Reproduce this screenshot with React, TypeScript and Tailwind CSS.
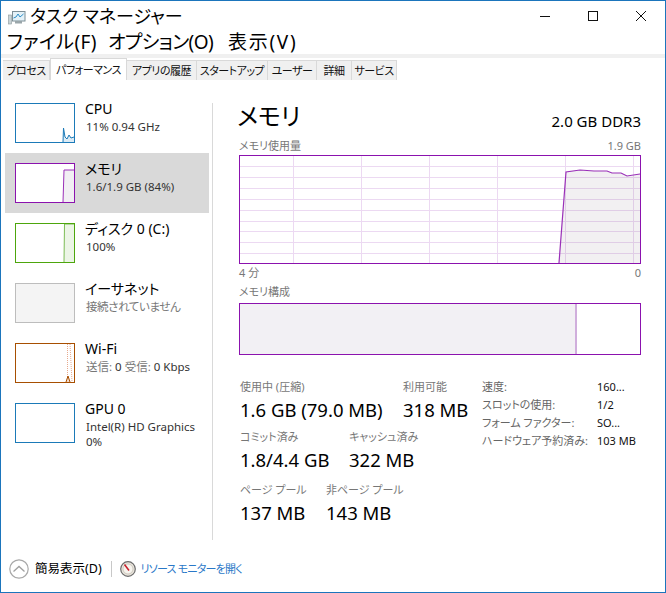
import React from "react";

const font = "font-['Noto_Sans','Noto_Sans_CJK_JP',sans-serif] [font-feature-settings:'palt']";

const tabs = [
  { label: "プロセス", w: "w-[47px]" },
  { label: "パフォーマンス", w: "w-[77px]", active: true },
  { label: "アプリの履歴", w: "w-[70px]" },
  { label: "スタートアップ", w: "w-[71px]" },
  { label: "ユーザー", w: "w-[49px]" },
  { label: "詳細", w: "w-[35px]" },
  { label: "サービス", w: "w-[45px]" },
];

function Thumb({ color, bg = "bg-white", children }: { color: string; bg?: string; children?: React.ReactNode }) {
  return <div className={`w-[60px] h-10 border ${color} ${bg} shrink-0 overflow-hidden`}>{children}</div>;
}

function Chart({ d, fill, stroke }: { d: string; fill: string; stroke: string }) {
  return (
    <svg width="58" height="38" viewBox="0 0 58 38" className="block">
      <path d={`${d} L58 38 Z`} fill={fill} stroke="none" />
      <path d={d} fill="none" stroke={stroke} strokeWidth="1" />
    </svg>
  );
}

function SideItem({ thumb, title, sub, selected }: { thumb: React.ReactNode; title: string; sub: React.ReactNode; selected?: boolean }) {
  return (
    <div className={`h-[60px] w-[204px] flex items-center pl-[10px] gap-[10px] ${selected ? "bg-[#d9d9d9]" : ""}`}>
      {thumb}
      <div className="flex flex-col self-start pt-[6px]">
        <div className="text-[14px] leading-[20px] text-black whitespace-nowrap">{title}</div>
        <div className="text-[11.5px] leading-[15px] text-[#333] whitespace-nowrap ml-[1px]">{sub}</div>
      </div>
    </div>
  );
}

function Stat({ label, value, w }: { label: string; value: string; w: string }) {
  return (
    <div className={`${w} shrink-0`}>
      <div className="text-[11px] leading-[15px] text-[#777] whitespace-nowrap">{label}</div>
      <div className="text-[18.5px] leading-[24px] mt-[4px] text-black whitespace-nowrap">{value}</div>
    </div>
  );
}

const hLines = [11, 22, 33, 44, 55, 66, 76, 87, 98];
const vLines = [54, 122, 190, 258, 326, 394];

function MemoryGraph() {
  const line = "M319 107 L326 16 L340 14 L354 15 L367 15 L372 17 L381 17 L387 20 L400 18";
  return (
    <div className="w-[402px] h-[109px] border border-[#8b12ae] bg-white">
      <svg width="400" height="107" viewBox="0 0 400 107" className="block">
        {hLines.map((y) => (
          <line key={y} x1="0" x2="400" y1={y - 0.5} y2={y - 0.5} stroke="#ecd9f2" />
        ))}
        {vLines.map((x) => (
          <line key={x} x1={x - 0.5} x2={x - 0.5} y1="0" y2="107" stroke="#ecd9f2" />
        ))}
        <path d={`${line} L400 107 Z`} fill="#6b5a70" fillOpacity="0.09" />
        <path d={line} fill="none" stroke="#9a30b8" strokeWidth="1.2" />
      </svg>
    </div>
  );
}

export default function App() {
  return (
    <div className={`w-[666px] h-[593px] bg-white border border-[#1b75bc] flex flex-col overflow-hidden ${font}`}>
      {/* title bar */}
      <div className="h-[29px] flex items-center shrink-0 relative">
        <svg width="18" height="18" viewBox="0 0 18 18" className="ml-[7px] mt-[2px]">
          <rect x="0.5" y="7" width="3" height="9" fill="#c9d3d6" stroke="#8b989c" strokeWidth="0.6" />
          <rect x="4.5" y="3.5" width="12.5" height="9.5" fill="#e4f1f8" stroke="#7d8e96" />
          <path d="M5.5 10 L8 9 L10 6 L12 9 L15.5 6" fill="none" stroke="#2f8fc7" strokeWidth="1" />
          <rect x="7" y="13" width="7" height="2.5" fill="#9aa6aa" />
        </svg>
        <span className="ml-[4px] text-[18px] leading-[24px] text-black whitespace-nowrap">タスク マネージャー</span>
        <div className="ml-auto flex items-center">
          <svg width="12" height="12" viewBox="0 0 12 12" className="mr-[36px]"><path d="M1 6.5H11" stroke="#111" strokeWidth="1" /></svg>
          <svg width="12" height="12" viewBox="0 0 12 12" className="mr-[36px]"><rect x="1.5" y="1.5" width="9" height="9" fill="none" stroke="#111" /></svg>
          <svg width="12" height="12" viewBox="0 0 12 12" className="mr-[18px]"><path d="M1 1L11 11M11 1L1 11" stroke="#111" strokeWidth="1" /></svg>
        </div>
      </div>
      {/* menu */}
      <div className="h-[24px] flex items-center pl-[6px] text-[19px] leading-[24px] text-black whitespace-nowrap shrink-0">
        <span className="w-[101px] tracking-[0.4px]">ファイル(F)</span>
        <span className="w-[120px] tracking-[-0.6px]">オプション(O)</span>
        <span className="tracking-[1.7px]">表示(V)</span>
      </div>
      <div className="h-[4px] bg-[#f0f0f0] shrink-0" />
      {/* tabs */}
      <div className="h-[22px] pl-[2px] flex items-end shrink-0">
        {tabs.map((t) =>
          <div
            key={t.label}
            className={`${t.w} flex items-center justify-center pt-[1px] text-[11px] tracking-[-0.5px] text-[#111] whitespace-nowrap border-t border-r border-[#d9d9d9] ${t.active ? "h-[22px] bg-white border-l relative z-10" : "h-[20px] bg-[#f0f0f0]"}`}
          >
            {t.label}
          </div>
        )}
      </div>
      {/* body */}
      <div className="flex flex-1 min-h-0 pl-[4px]">
        <div className="w-[204px] pt-[13px] shrink-0">
          <SideItem
            thumb={<Thumb color="border-[#1b7ab8]"><Chart fill="#dcebf5" stroke="#1b7ab8" d="M47 38 L47.5 24 L49 33 L51 35 L53 31 L55 34 L58 33" /></Thumb>}
            title="CPU"
            sub="11%  0.94 GHz"
          />
          <SideItem
            selected
            thumb={<Thumb color="border-[#8b12ae]"><Chart fill="#f1eff3" stroke="#9a30b8" d="M47 38 L48 6 L58 6" /></Thumb>}
            title="メモリ"
            sub="1.6/1.9 GB (84%)"
          />
          <SideItem
            thumb={<Thumb color="border-[#4da60c]"><Chart fill="#ecf5e6" stroke="#7cbc54" d="M48 38 L48.5 0 L58 0" /></Thumb>}
            title="ディスク 0 (C:)"
            sub="100%"
          />
          <SideItem
            thumb={<Thumb color="border-[#bdbdbd]" bg="bg-[#f4f4f4]" />}
            title="イーサネット"
            sub={<span className="text-[#777] tracking-[-0.4px]">接続されていません</span>}
          />
          <SideItem
            thumb={
              <Thumb color="border-[#a74f01]">
                <svg width="58" height="38" viewBox="0 0 58 38" className="block">
                  <line x1="51.5" y1="0" x2="51.5" y2="38" stroke="#e8a98c" strokeDasharray="1 1" />
                  <path d="M54 0 L56 38" stroke="#e8a98c" strokeDasharray="1 1" />
                  <path d="M50 38 L52 32 L54 38" fill="#f5dccb" stroke="#a74f01" />
                </svg>
              </Thumb>
            }
            title="Wi-Fi"
            sub={<span><span className="text-[#777]">送信:</span> 0 <span className="text-[#777]">受信:</span> 0 Kbps</span>}
          />
          <SideItem
            thumb={<Thumb color="border-[#1b7ab8]" />}
            title="GPU 0"
            sub={<span className="flex flex-col"><span>Intel(R) HD Graphics</span><span>0%</span></span>}
          />
        </div>
        {/* main panel */}
        <div className="ml-[3px] mt-[23px] mb-[27px] border-l border-[#d9d9d9] pl-[26px] w-[428px] flex flex-col">
          <div className="flex items-end justify-between w-[402px] h-[30px]">
            <span className="text-[24px] leading-[32px] text-black -ml-[2px] mb-[1px]">メモリ</span>
            <span className="text-[15px] leading-[20px] text-black mb-[2px]">2.0 GB DDR3</span>
          </div>
          <div className="flex justify-between w-[402px] text-[11px] leading-[15px] text-[#777] mt-[5px] mb-[2px]">
            <span>メモリ使用量</span>
            <span>1.9 GB</span>
          </div>
          <MemoryGraph />
          <div className="flex justify-between w-[402px] text-[11px] leading-[15px] text-[#777] mt-[1px]">
            <span>4 分</span>
            <span>0</span>
          </div>
          <div className="text-[11px] leading-[15px] text-[#777] mt-[4px] mb-[4px]">メモリ構成</div>
          <div className="w-[402px] h-[52px] border border-[#8b12ae] flex shrink-0">
            <div className="w-[335px] bg-[#f2f0f4]" />
            <div className="w-[2px] bg-[#d0aedc]" />
          </div>
          <div className="flex mt-[24px] pl-[1px]">
            <div className="w-[242px] shrink-0 flex flex-col">
              <div className="flex">
                <Stat w="w-[163px]" label="使用中 (圧縮)" value="1.6 GB (79.0 MB)" />
                <Stat w="w-[79px]" label="利用可能" value="318 MB" />
              </div>
              <div className="flex mt-[7px]">
                <Stat w="w-[109px]" label="コミット済み" value="1.8/4.4 GB" />
                <Stat w="w-[100px]" label="キャッシュ済み" value="322 MB" />
              </div>
              <div className="flex mt-[10px]">
                <Stat w="w-[86px]" label="ページ プール" value="137 MB" />
                <Stat w="w-[100px]" label="非ページ プール" value="143 MB" />
              </div>
            </div>
            <div className="text-[11px] leading-[18px] whitespace-nowrap -mt-[1px]">
              {[
                ["速度:", "160..."],
                ["スロットの使用:", "1/2"],
                ["フォーム ファクター:", "SO..."],
                ["ハードウェア予約済み:", "103 MB"],
              ].map(([k, v]) => (
                <div key={k} className="flex">
                  <span className="w-[115px] text-[#666]">{k}</span>
                  <span className="text-[#111]">{v}</span>
                </div>
              ))}
            </div>
          </div>
        </div>
      </div>
      {/* footer */}
      <div className="h-[36px] flex items-center pl-[8px] shrink-0 -mt-[16px] mb-[5px]">
        <svg width="20" height="20" viewBox="0 0 20 20">
          <circle cx="10" cy="10" r="9.2" fill="none" stroke="#a8a8a8" strokeWidth="1.2" />
          <path d="M4.5 12.5L10 7.5L15.5 12.5" fill="none" stroke="#a0a0a0" strokeWidth="1.3" />
        </svg>
        <span className="ml-[6px] text-[12.5px] text-black whitespace-nowrap">簡易表示(D)</span>
        <div className="ml-[9px] w-px h-[16px] bg-[#c8c8c8]" />
        <svg width="16" height="16" viewBox="0 0 16 16" className="ml-[8px]">
          <circle cx="8" cy="8" r="7.3" fill="#e8e4dc" stroke="#6b6b6b" strokeWidth="1.2" />
          <circle cx="8" cy="8" r="5" fill="#f7f4ee" stroke="#b8b2a6" strokeWidth="0.6" />
          <path d="M4.5 3.5L9 9.5" stroke="#c8202c" strokeWidth="1.5" />
        </svg>
        <span className="ml-[5px] text-[11px] tracking-[-0.8px] text-[#2a78c8] whitespace-nowrap">リソース モニターを開く</span>
      </div>
    </div>
  );
}
